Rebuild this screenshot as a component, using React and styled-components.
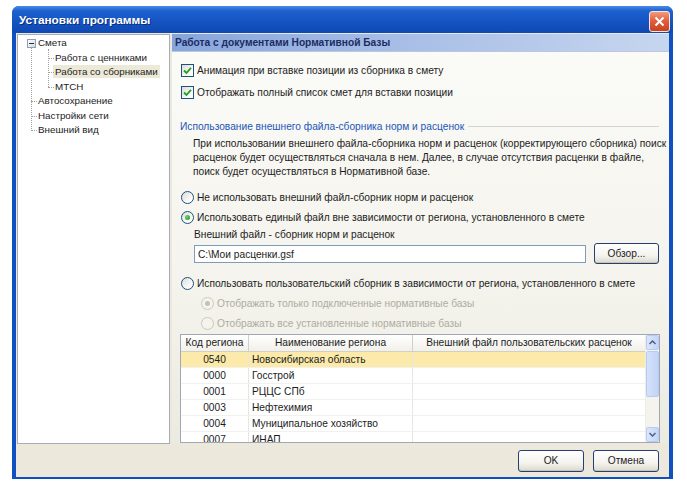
import React from 'react';
import styled, { createGlobalStyle, css } from 'styled-components';

const GlobalStyle = createGlobalStyle`
  html, body {
    margin: 0;
    padding: 0;
    background: #ffffff;
  }
  body {
    font-family: "Liberation Sans", Arial, sans-serif;
    font-size: 10.2px;
    color: #1c1c1c;
  }
`;

const Window = styled.div`
  margin: 6px 0 0 12px;
  width: 661px;
  height: 473px;
  border-radius: 7px 7px 0 0;
  background: #1150c0;
  display: flex;
  flex-direction: column;
  overflow: hidden;
`;

const TitleBar = styled.div`
  height: 27px;
  flex: none;
  display: flex;
  align-items: center;
  justify-content: space-between;
  padding: 0 3px 0 7px;
  background: linear-gradient(180deg, #4a8ae8 0%, #1e60cf 18%, #1553c2 60%, #0f49b2 100%);
`;

const Title = styled.span`
  color: #ffffff;
  font-weight: bold;
  font-size: 11.8px;
  text-shadow: 1px 1px 0 #0a2f7a;
`;

const CloseButton = styled.div`
  width: 19px;
  height: 19px;
  margin-top: 3px;
  border: 1px solid #f4e8e4;
  border-radius: 3px;
  background: linear-gradient(180deg, #f29a7c 0%, #e2603f 45%, #c9401f 100%);
  display: flex;
  align-items: center;
  justify-content: center;
`;

const Body = styled.div`
  flex: 1;
  margin: 0 4px 3px 4px;
  background: #ece9dc;
  display: flex;
  flex-direction: column;
`;

const Main = styled.div`
  flex: 1;
  display: flex;
  gap: 2px;
  padding: 1px 0 0 1px;
`;

const TreePanel = styled.div`
  flex: none;
  width: 151px;
  height: 407px;
  background: #ffffff;
  border: 1px solid #a7adb6;
  padding-top: 1px;
  box-sizing: content-box;
  font-size: 9.8px;
`;

const TreeGroup = styled.div`
  position: relative;

  &::before {
    content: '';
    position: absolute;
    left: ${p => p.$line}px;
    top: ${p => p.$top}px;
    bottom: 7px;
    border-left: 1px dotted #a0a0a0;
  }
`;

const TreeRow = styled.div`
  position: relative;
  height: 14.5px;
  line-height: 14.5px;
  padding-left: ${p => p.$text}px;
  white-space: nowrap;

  ${p => p.$line !== undefined && css`
    &::before {
      content: '';
      position: absolute;
      left: ${p.$line}px;
      width: ${p.$text - p.$line - 1}px;
      top: 7px;
      border-top: 1px dotted #a0a0a0;
    }
  `}
`;

const TreeLabel = styled.span`
  padding: 1px 2px;
  margin-left: -2px;
  background: ${p => (p.$selected ? '#ece9d8' : 'transparent')};
`;

const Expander = styled.span`
  position: absolute;
  left: 9px;
  top: 3px;
  width: 7px;
  height: 7px;
  border: 1px solid #8e9fb8;
  background: linear-gradient(135deg, #ffffff, #d8d9d0);
  z-index: 1;

  &::after {
    content: '';
    position: absolute;
    left: 1px;
    right: 1px;
    top: 3px;
    border-top: 1px solid #1c2f5a;
  }
`;

const Content = styled.div`
  flex: 1;
  min-width: 0;
  height: 409px;
  display: flex;
  flex-direction: column;
  background: linear-gradient(180deg, #fbfbf8 0%, #f5f4ee 55%, #ecebe2 100%);
`;

const SectionHeader = styled.div`
  height: 17px;
  line-height: 17px;
  padding-left: 3px;
  font-weight: bold;
  color: #1b2c63;
  background: linear-gradient(90deg, #87a5db 0%, #a7bde6 45%, #c7d6ef 100%);
  border-bottom: 1px solid #b9c8e2;
`;

const Form = styled.div`
  display: flex;
  flex-direction: column;
  padding: 7px 10px 0 8px;
`;

const OptionRow = styled.label`
  display: flex;
  align-items: center;
  gap: 3px;
  height: ${p => p.$h || 20}px;
  margin-left: ${p => p.$indent || 1}px;
  white-space: nowrap;
  color: ${p => (p.$disabled ? '#aeada2' : '#1c1c1c')};
`;

const Box = styled.span`
  width: 11px;
  height: 11px;
  border: 1px solid #1c5180;
  background: linear-gradient(135deg, #dcdcd6 0%, #ffffff 80%);
  display: flex;
  align-items: center;
  justify-content: center;
  flex: none;
`;

const Radio = styled.span`
  width: 11px;
  height: 11px;
  border-radius: 50%;
  border: 1px solid ${p => (p.$disabled ? '#cbc9bd' : '#1c5180')};
  background: ${p => (p.$disabled ? '#f4f3ee' : 'linear-gradient(135deg, #dcdcd6 0%, #ffffff 80%)')};
  display: flex;
  align-items: center;
  justify-content: center;
  flex: none;

  &::after {
    content: '';
    display: ${p => (p.$checked ? 'block' : 'none')};
    width: 5px;
    height: 5px;
    border-radius: 50%;
    background: ${p => (p.$disabled ? '#c4c2b6' : 'radial-gradient(circle at 35% 35%, #6fd36f, #1f8f1f)')};
  }
`;

const GroupTitle = styled.div`
  display: flex;
  align-items: center;
  gap: 4px;
  height: 22px;
  margin-top: 12px;
  color: #2456b8;
  white-space: nowrap;

  &::after {
    content: '';
    flex: 1;
    border-top: 1px solid #d6d5cb;
  }
`;

const Note = styled.div`
  padding-left: 13px;
  margin-bottom: 8px;

  span {
    display: block;
    height: 14px;
    line-height: 14px;
    white-space: nowrap;
  }
`;

const FieldLabel = styled.div`
  height: 16px;
  line-height: 16px;
  padding-left: 14px;
`;

const FieldRow = styled.div`
  display: flex;
  align-items: center;
  gap: 8px;
  padding-left: 14px;
  height: 21px;
  margin-bottom: 9px;
`;

const TextInput = styled.div`
  width: 392px;
  height: 18px;
  line-height: 18px;
  border: 1px solid #7f9db9;
  background: #ffffff;
  padding-left: 3px;
  box-sizing: border-box;
`;

const Button = styled.div`
  width: ${p => p.$w || 66}px;
  height: ${p => p.$h || 22}px;
  box-sizing: border-box;
  border: 1px solid #263f72;
  border-radius: 3px;
  background: linear-gradient(180deg, #ffffff 0%, #f4f3ee 60%, #dcd9cc 100%);
  box-shadow: inset 0 -1px 0 #c9c5b4;
  display: flex;
  align-items: center;
  justify-content: center;
  color: #1c1c1c;
`;

const Table = styled.div`
  margin-top: 1px;
  width: 480px;
  height: 109px;
  box-sizing: border-box;
  border: 1px solid #a2a8b2;
  background: #ffffff;
  display: flex;
  overflow: hidden;
`;

const TableGrid = styled.div`
  flex: 1;
  overflow: hidden;
`;

const TRow = styled.div`
  display: grid;
  grid-template-columns: 68px 164px 1fr;
  height: ${p => (p.$head ? 16 : 15)}px;
  line-height: ${p => (p.$head ? 16 : 15)}px;
  background: ${p => (p.$head ? 'linear-gradient(180deg, #ffffff 0%, #f1f0ea 100%)' : p.$selected ? '#fbeaa9' : '#ffffff')};
  border-bottom: 1px solid ${p => (p.$head ? '#d2d0c4' : '#f1f1ee')};
`;

const Cell = styled.div`
  padding: 0 ${p => (p.$center ? 0 : 3)}px;
  text-align: ${p => (p.$center ? 'center' : 'left')};
  border-right: 1px solid ${p => (p.$head ? '#d2d0c4' : '#e7e6e0')};
  white-space: nowrap;
  overflow: hidden;

  &:last-child {
    border-right: none;
  }
`;

const ScrollBar = styled.div`
  width: 13px;
  flex: none;
  display: flex;
  flex-direction: column;
  background: #f4f3ee;
  border-left: 1px solid #eeede6;
`;

const ScrollButton = styled.div`
  height: 15px;
  flex: none;
  box-sizing: border-box;
  border: 1px solid #b8cbf2;
  border-radius: 2px;
  background: linear-gradient(90deg, #dbe6fc 0%, #c5d5f8 100%);
  display: flex;
  align-items: center;
  justify-content: center;
`;

const ScrollTrack = styled.div`
  flex: 1;
  display: flex;
  flex-direction: column;
`;

const ScrollThumb = styled.div`
  height: 46px;
  margin-top: 1px;
  box-sizing: border-box;
  border: 1px solid #b8cbf2;
  border-radius: 2px;
  background: linear-gradient(90deg, #d6e2fb 0%, #c3d3f7 100%);
`;

const Footer = styled.div`
  height: 33px;
  flex: none;
  display: flex;
  align-items: center;
  justify-content: flex-end;
  gap: 9px;
  padding-right: 10px;
`;

const Check = () => (
  <svg width="9" height="9" viewBox="0 0 9 9">
    <path d="M1 4.5 L3.5 7 L8 1.8" fill="none" stroke="#21a121" strokeWidth="1.8" />
  </svg>
);

const Arrow = ({ up }) => (
  <svg width="7" height="5" viewBox="0 0 7 5">
    <path d={up ? 'M0.5 4 L3.5 1 L6.5 4' : 'M0.5 1 L3.5 4 L6.5 1'} fill="none" stroke="#4d6185" strokeWidth="1.5" />
  </svg>
);

const regions = [
  { code: '0540', name: 'Новосибирская область', selected: true },
  { code: '0000', name: 'Госстрой' },
  { code: '0001', name: 'РЦЦС СПб' },
  { code: '0003', name: 'Нефтехимия' },
  { code: '0004', name: 'Муниципальное хозяйство' },
  { code: '0007', name: 'ИНАП' },
];

export default function App() {
  return (
    <>
      <GlobalStyle />
      <Window>
        <TitleBar>
          <Title>Установки программы</Title>
          <CloseButton>
            <svg width="11" height="11" viewBox="0 0 11 11">
              <path d="M1.5 1.5 L9.5 9.5 M9.5 1.5 L1.5 9.5" stroke="#ffffff" strokeWidth="2" />
            </svg>
          </CloseButton>
        </TitleBar>
        <Body>
          <Main>
            <TreePanel>
              <TreeGroup $line={13} $top={7}>
                <TreeRow $text={20}>
                  <Expander />
                  <TreeLabel>Смета</TreeLabel>
                </TreeRow>
                <TreeGroup $line={30} $top={-2}>
                  <TreeRow $text={37} $line={30}><TreeLabel>Работа с ценниками</TreeLabel></TreeRow>
                  <TreeRow $text={37} $line={30}><TreeLabel $selected>Работа со сборниками</TreeLabel></TreeRow>
                  <TreeRow $text={37} $line={30}><TreeLabel>МТСН</TreeLabel></TreeRow>
                </TreeGroup>
                <TreeRow $text={20} $line={13}><TreeLabel>Автосохранение</TreeLabel></TreeRow>
                <TreeRow $text={20} $line={13}><TreeLabel>Настройки сети</TreeLabel></TreeRow>
                <TreeRow $text={20} $line={13}><TreeLabel>Внешний вид</TreeLabel></TreeRow>
              </TreeGroup>
            </TreePanel>

            <Content>
              <SectionHeader>Работа с документами Нормативной Базы</SectionHeader>
              <Form>
                <OptionRow $h={22}>
                  <Box><Check /></Box>
                  Анимация при вставке позиции из сборника в смету
                </OptionRow>
                <OptionRow $h={22}>
                  <Box><Check /></Box>
                  Отображать полный список смет для вставки позиции
                </OptionRow>

                <GroupTitle>Использование внешнего файла-сборника норм и расценок</GroupTitle>
                <Note>
                  <span>При использовании внешнего файла-сборника норм и расценок (корректирующего сборника) поиск</span>
                  <span>расценок будет осуществляться сначала в нем. Далее, в случае отсутствия расценки в файле,</span>
                  <span>поиск будет осуществляться в Нормативной базе.</span>
                </Note>

                <OptionRow>
                  <Radio />
                  Не использовать внешний файл-сборник норм и расценок
                </OptionRow>
                <OptionRow>
                  <Radio $checked />
                  Использовать единый файл вне зависимости от региона, установленного в смете
                </OptionRow>
                <FieldLabel>Внешний файл - сборник норм и расценок</FieldLabel>
                <FieldRow>
                  <TextInput>C:\Мои расценки.gsf</TextInput>
                  <Button $w={65} $h={21}>Обзор...</Button>
                </FieldRow>
                <OptionRow>
                  <Radio />
                  Использовать пользовательский сборник в зависимости от региона, установленного в смете
                </OptionRow>
                <OptionRow $indent={21} $disabled>
                  <Radio $checked $disabled />
                  Отображать только подключенные нормативные базы
                </OptionRow>
                <OptionRow $indent={21} $disabled>
                  <Radio $disabled />
                  Отображать все установленные нормативные базы
                </OptionRow>

                <Table>
                  <TableGrid>
                    <TRow $head>
                      <Cell $head $center>Код региона</Cell>
                      <Cell $head $center>Наименование региона</Cell>
                      <Cell $head $center>Внешний файл пользовательских расценок</Cell>
                    </TRow>
                    {regions.map(r => (
                      <TRow key={r.code} $selected={r.selected}>
                        <Cell $center>{r.code}</Cell>
                        <Cell>{r.name}</Cell>
                        <Cell />
                      </TRow>
                    ))}
                  </TableGrid>
                  <ScrollBar>
                    <ScrollButton><Arrow up /></ScrollButton>
                    <ScrollTrack>
                      <ScrollThumb />
                    </ScrollTrack>
                    <ScrollButton><Arrow /></ScrollButton>
                  </ScrollBar>
                </Table>
              </Form>
            </Content>
          </Main>
          <Footer>
            <Button>OK</Button>
            <Button>Отмена</Button>
          </Footer>
        </Body>
      </Window>
    </>
  );
}
